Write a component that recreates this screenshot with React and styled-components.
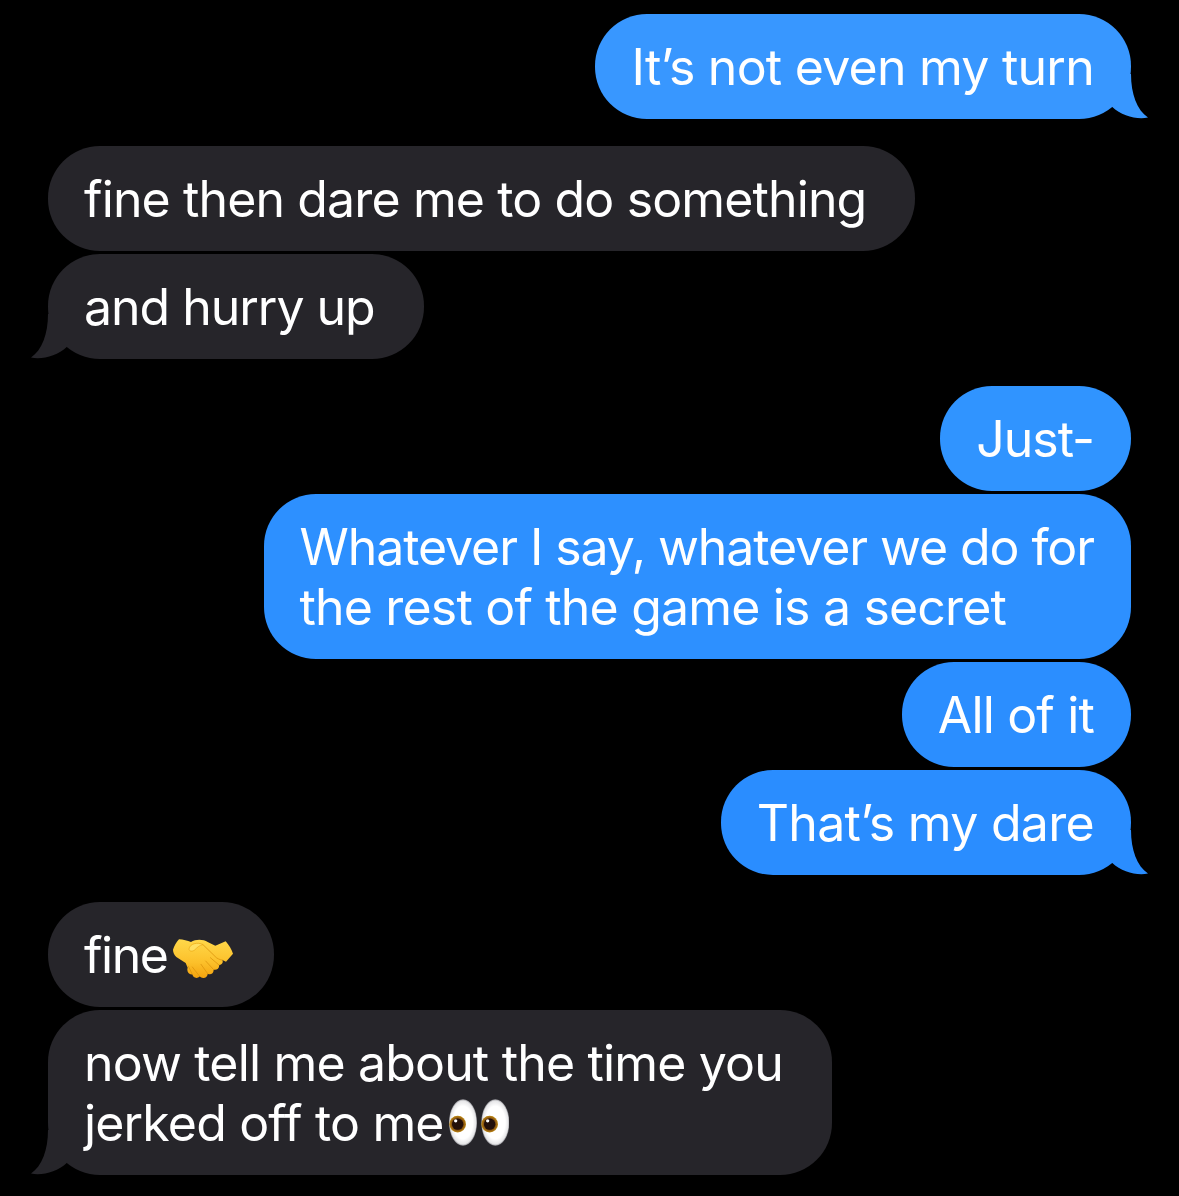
import React from 'react';
import styled, { createGlobalStyle } from 'styled-components';

const GlobalStyle = createGlobalStyle`
  html, body {
    margin: 0;
    background: #000;
  }
`;

const Thread = styled.div`
  width: 1179px;
  height: 1196px;
  box-sizing: border-box;
  padding: 14px 48px 0;
  display: flex;
  flex-direction: column;
  gap: 27px;
  overflow: hidden;
  background: #000;
  font-family: Inter, "Liberation Sans", sans-serif;
`;

const Group = styled.div`
  display: flex;
  flex-direction: column;
  gap: 3px;
  align-items: ${(p) => (p.$mine ? 'flex-end' : 'flex-start')};
`;

const Bubble = styled.div`
  position: relative;
  padding: 22.5px ${(p) => (p.$mine ? 37 : 49)}px 22.5px 36px;
  border-radius: 52px;
  background: ${(p) => p.$tone};
  color: #fff;
  font-size: 50px;
  font-weight: 380;
  line-height: 60px;
  white-space: nowrap;
`;

const Line = styled.div`
  height: 60px;
  letter-spacing: ${(p) => p.$track}px;
`;

const Tail = styled.svg`
  position: absolute;
  bottom: 0;
  width: 48px;
  height: 45px;
  ${(p) => (p.$mine ? 'right: -17px;' : 'left: -17px; transform: scaleX(-1);')}
`;

const Emoji = styled.svg`
  display: inline-block;
  vertical-align: ${(p) => p.$drop}px;
  margin-left: ${(p) => p.$gap}px;
  margin-right: ${(p) => p.$after || 0}px;
`;

const BubbleTail = ({ mine, tone }) => (
  <Tail $mine={mine} viewBox="0 0 48 45">
    <path
      d="M31 0 C31 20 37 36 48 43.6 C36 45.6 22 42 12 32.8 L12 0 Z"
      fill={tone}
    />
  </Tail>
);

const Handshake = () => (
  <Emoji $drop={-6} $gap={5} $after={-8} width="60" height="40" viewBox="38 40 180 120">
    <defs>
      <linearGradient id="hand" x1="0" y1="0" x2="0" y2="1">
        <stop offset="0" stopColor="#ffd84a" />
        <stop offset="0.6" stopColor="#fcc02a" />
        <stop offset="1" stopColor="#f3a30e" />
      </linearGradient>
    </defs>
    <path
      d="M56 41 C68 42 82 45 92 49 C106 40 130 41 142 49 L165 60 L196 47 C206 58 214 72 218 84 L197 108 L186 103 C190 112 184 118 176 118 C178 128 170 134 160 132 C160 144 150 148 142 144 C142 156 126 162 118 152 C112 160 98 158 96 146 C86 148 78 138 82 126 L76 112 L48 94 C42 88 38 80 38 72 C42 60 48 50 56 41 Z"
      fill="url(#hand)"
    />
    <path
      d="M128 57 L168 96 C176 102 186 104 186 103 M150 96 L176 118 M136 106 L160 132 M122 116 L142 144 M96 124 L118 152 M84 122 L96 146"
      fill="none"
      stroke="#dd960e"
      strokeWidth="2.5"
      strokeLinecap="round"
    />
    <path
      d="M86 70 C88 54 112 48 128 57 C118 58 110 66 104 72 C98 78 86 78 86 70 Z"
      fill="#ffe062"
      stroke="#e8a512"
      strokeWidth="2"
    />
  </Emoji>
);

const Eye = ({ cx, irisX }) => (
  <g>
    <ellipse cx={cx} cy="95" rx="42" ry="70" fill="url(#eyeball)" />
    <circle cx={irisX} cy="100" r="25" fill="url(#iris)" />
    <circle cx={irisX} cy="100" r="17" fill="#23100a" />
    <circle cx={irisX - 6} cy="90" r="5" fill="#fff" />
  </g>
);

const Eyes = () => (
  <Emoji $drop={-5} $gap={5} width="60" height="47" viewBox="38 25 180 140">
    <defs>
      <radialGradient id="eyeball">
        <stop offset="0.7" stopColor="#fff" />
        <stop offset="0.92" stopColor="#e6e6e8" />
        <stop offset="1" stopColor="#8f8f94" />
      </radialGradient>
      <radialGradient id="iris">
        <stop offset="0.6" stopColor="#6d3a0d" />
        <stop offset="1" stopColor="#c08a16" />
      </radialGradient>
    </defs>
    <Eye cx={80} irisX={64} />
    <Eye cx={177} irisX={160} />
  </Emoji>
);

const grey = '#26252a';

const groups = [
  {
    mine: true,
    items: [{ tone: '#3897ff', lines: [['It’s not even my turn', -0.76]] }],
  },
  {
    mine: false,
    items: [
      { tone: grey, lines: [['fine then dare me to do something', -0.87]] },
      { tone: grey, lines: [['and hurry up', -1.03]] },
    ],
  },
  {
    mine: true,
    items: [
      { tone: '#3094ff', lines: [['Just-', -1.05]] },
      {
        tone: '#2d90ff',
        lines: [
          ['Whatever I say, whatever we do for', -1.08],
          ['the rest of the game is a secret', -0.82],
        ],
      },
      { tone: '#2b8eff', lines: [['All of it', -0.85]] },
      { tone: '#2a8dff', lines: [['That’s my dare', -0.7]] },
    ],
  },
  {
    mine: false,
    items: [
      { tone: grey, lines: [['fine', -1.45]], emoji: <Handshake /> },
      {
        tone: grey,
        lines: [
          ['now tell me about the time you', -0.83],
          ['jerked off to me', -0.83],
        ],
        emoji: <Eyes />,
      },
    ],
  },
];

const App = () => (
  <>
    <GlobalStyle />
    <Thread>
      {groups.map((group, g) => (
        <Group key={g} $mine={group.mine}>
          {group.items.map((item, i) => (
            <Bubble key={i} $mine={group.mine} $tone={item.tone}>
              {item.lines.map(([text, track], l) => (
                <Line key={l} $track={track}>
                  {text}
                  {l === item.lines.length - 1 && item.emoji}
                </Line>
              ))}
              {i === group.items.length - 1 && (
                <BubbleTail mine={group.mine} tone={item.tone} />
              )}
            </Bubble>
          ))}
        </Group>
      ))}
    </Thread>
  </>
);

export default App;
